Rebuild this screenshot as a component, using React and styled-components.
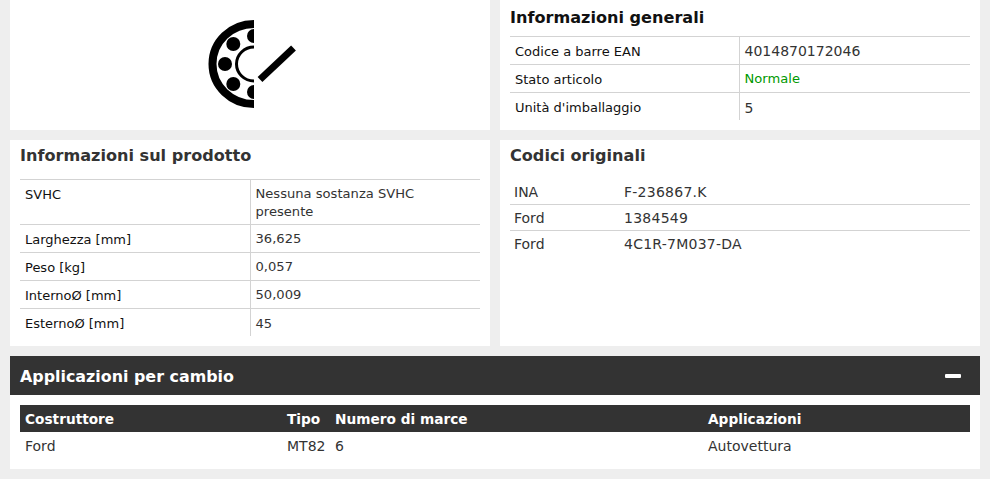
import React from "react";
import styled, { createGlobalStyle } from "styled-components";

const Global = createGlobalStyle`
  html, body { margin: 0; padding: 0; background: #eee; }
  body { font-family: "DejaVu Sans", Verdana, sans-serif; font-size: 13px; color: #333; }
`;
const Page = styled.div`
  width: 970px;
  padding: 0 10px 10px;
  display: grid;
  grid-template-columns: 480px 480px;
  grid-template-rows: 130px 206px auto;
  gap: 10px;
`;
const Panel = styled.section`
  background: #fff;
  padding: 0 10px;
  min-width: 0;
`;
const LogoPanel = styled(Panel)`
  display: flex;
  justify-content: center;
  padding: 0;
`;
const Title = styled.h2`
  margin: 0;
  height: ${p => p.$h}px;
  padding: ${p => p.$top}px 0 0;
  box-sizing: border-box;
  font-size: 16.1px;
  line-height: 22px;
  font-weight: 700;
  color: ${p => p.$color || "#333"};
`;
const Table = styled.table`
  width: 460px;
  table-layout: fixed;
  border-collapse: collapse;
`;
const Row = styled.tr`
  border-top: 1px solid #d3d3d3;
  &:last-child td { padding-top: 3px; }
  &:last-child td:first-child { height: 27px; }
`;
const Label = styled.td`
  width: ${p => p.$w}px;
  height: 28px;
  padding: 1px 5px 0;
  box-sizing: border-box;
  border-right: 1px solid #d3d3d3;
  color: #111;
  line-height: 17px;
  vertical-align: ${p => p.$top ? "top" : "middle"};
  ${p => p.$top && "padding-top: 6px;"}
`;
const Value = styled.td`
  padding: ${p => p.$tall ? "5px 5px 3px" : "1px 5px 0"};
  line-height: 18px;
  font-size: ${p => p.$large ? "14px" : "13.1px"};
  color: ${p => p.$color || "#333"};
  vertical-align: middle;
`;
const CodeRow = styled.tr`
  border-top: 1px solid #d3d3d3;
  &:first-child { border-top: 0; }
  &:first-child td:first-child { height: 25px; }
`;
const Brand = styled.td`
  width: 114px;
  height: 26px;
  padding: 1px 0 0 4px;
  box-sizing: border-box;
  font-size: 14px;
`;
const Code = styled.td`
  padding: 1px 0 0;
  font-size: 14px;
  letter-spacing: 0.25px;
`;
const Wide = styled.section`
  grid-column: 1 / 3;
  background: #fff;
  padding-bottom: 10px;
`;
const Bar = styled.header`
  height: 39px;
  background: #333;
  color: #fff;
  padding: 0 19px 0 10px;
  display: flex;
  align-items: center;
  justify-content: space-between;
`;
const BarTitle = styled.h2`
  margin: 2px 0 0;
  font-size: 15.9px;
  font-weight: 700;
`;
const Minus = styled.span`
  width: 16px;
  height: 4px;
  border-radius: 1px;
  background: #fff;
`;
const AppTable = styled.table`
  width: 950px;
  margin: 10px 10px 0;
  table-layout: fixed;
  border-collapse: collapse;
`;
const Head = styled.th`
  height: 27px;
  padding: 0 5px;
  box-sizing: border-box;
  background: #333;
  color: #fff;
  text-align: left;
  font-size: 13.7px;
  font-weight: 700;
  width: ${p => p.$w ? p.$w + "px" : "auto"};
`;
const Cell = styled.td`
  height: 27px;
  padding: 0 5px;
  font-size: 14px;
`;

const Bearing = () => (
  <svg width="100" height="130" viewBox="200 0 100 130" aria-hidden="true">
    <path d="M254 24A41.5 40 0 0 0 254 104" fill="none" stroke="#000" strokeWidth="8" />
    <circle cx="233.3" cy="44" r="7" />
    <circle cx="225" cy="64" r="7" />
    <circle cx="233.3" cy="84" r="7" />
    <path d="M254 29A7 7 0 0 0 254 43ZM254 85A7 7 0 0 0 254 99Z" />
    <path d="M254 47A17.5 17 0 0 0 254 81" fill="none" stroke="#000" strokeWidth="3" />
    <path d="M260 79.5L293.5 48" fill="none" stroke="#000" strokeWidth="7" />
  </svg>
);

const general = [
  ["Codice a barre EAN", "4014870172046", null, true],
  ["Stato articolo", "Normale", "#090", false],
  ["Unità d'imballaggio", "5", null, true],
];
const product = [
  ["Larghezza [mm]", "36,625"],
  ["Peso [kg]", "0,057"],
  ["InternoØ [mm]", "50,009"],
  ["EsternoØ [mm]", "45"],
];
const codes = [["INA", "F-236867.K"], ["Ford", "1384549"], ["Ford", "4C1R-7M037-DA"]];

export default function App() {
  return (
    <>
      <Global />
      <Page>
        <LogoPanel><Bearing /></LogoPanel>
        <Panel>
          <Title $h={36} $top={7} $color="#111">Informazioni generali</Title>
          <Table>
            <tbody>
              {general.map(([k, v, c, l]) => (
                <Row key={k}><Label $w={229}>{k}</Label><Value $color={c} $large={l}>{v}</Value></Row>
              ))}
            </tbody>
          </Table>
        </Panel>
        <Panel>
          <Title $h={39} $top={5}>Informazioni sul prodotto</Title>
          <Table>
            <tbody>
              <Row><Label $w={230} $top>SVHC</Label><Value $tall>Nessuna sostanza SVHC presente</Value></Row>
              {product.map(([k, v]) => (
                <Row key={k}><Label $w={230}>{k}</Label><Value>{v}</Value></Row>
              ))}
            </tbody>
          </Table>
        </Panel>
        <Panel>
          <Title $h={39} $top={5}>Codici originali</Title>
          <Table>
            <tbody>
              {codes.map(([b, c]) => (
                <CodeRow key={c}><Brand>{b}</Brand><Code>{c}</Code></CodeRow>
              ))}
            </tbody>
          </Table>
        </Panel>
        <Wide>
          <Bar><BarTitle>Applicazioni per cambio</BarTitle><Minus /></Bar>
          <AppTable>
            <thead>
              <tr>
                <Head $w={262}>Costruttore</Head>
                <Head $w={48}>Tipo</Head>
                <Head $w={373}>Numero di marce</Head>
                <Head>Applicazioni</Head>
              </tr>
            </thead>
            <tbody>
              <tr><Cell>Ford</Cell><Cell>MT82</Cell><Cell>6</Cell><Cell>Autovettura</Cell></tr>
            </tbody>
          </AppTable>
        </Wide>
      </Page>
    </>
  );
}
